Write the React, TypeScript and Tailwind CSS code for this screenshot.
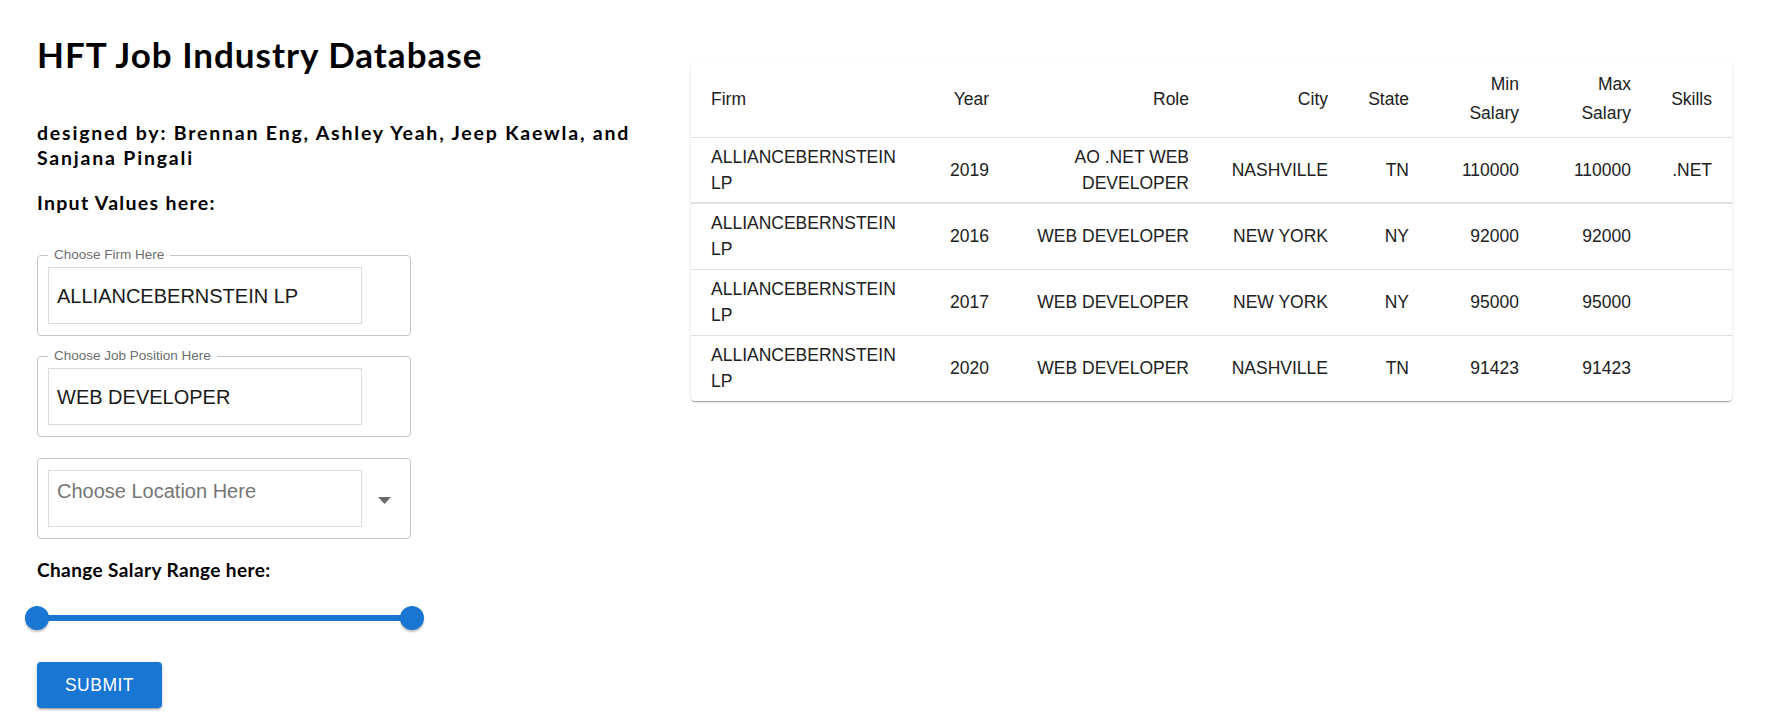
import { useState } from "react";

const rows = [
  { firm: "ALLIANCEBERNSTEIN LP", year: 2019, role: "AO .NET WEB DEVELOPER", city: "NASHVILLE", state: "TN", min: 110000, max: 110000, skills: ".NET" },
  { firm: "ALLIANCEBERNSTEIN LP", year: 2016, role: "WEB DEVELOPER", city: "NEW YORK", state: "NY", min: 92000, max: 92000, skills: "" },
  { firm: "ALLIANCEBERNSTEIN LP", year: 2017, role: "WEB DEVELOPER", city: "NEW YORK", state: "NY", min: 95000, max: 95000, skills: "" },
  { firm: "ALLIANCEBERNSTEIN LP", year: 2020, role: "WEB DEVELOPER", city: "NASHVILLE", state: "TN", min: 91423, max: 91423, skills: "" }
];

const heading = "font-['Lato',sans-serif] font-bold text-black";

function OutlinedField({ label, value, placeholder, select }: { label?: string; value?: string; placeholder?: string; select?: boolean }) {
  return (
    <div className="relative flex h-[81px] w-[374px] items-center rounded border border-[#c4c4c4] px-[10px]">
      {label && (
        <span className="absolute -top-[10px] left-[10px] bg-white px-[6px] text-[13.5px] leading-[18px] text-[#6e6e6e]">
          {label}
        </span>
      )}
      <div
        className={
          "flex h-[57px] w-[314px] border border-[#dcdcdc] px-[8px] text-[20px] leading-[24px] " +
          (select ? "items-start pt-[8px] text-[#767676]" : "items-center text-[#1a1a1a]")
        }
      >
        {value ?? placeholder}
      </div>
      {select && (
        <svg className="ml-[16px] mt-[4px]" width="13" height="7" viewBox="0 0 13 7">
          <polygon points="0,0 13,0 6.5,7" fill="#6b6b6b" />
        </svg>
      )}
    </div>
  );
}

export default function App() {
  const [firm] = useState("ALLIANCEBERNSTEIN LP");

  return (
    <div className="flex min-h-[718px] bg-white font-['Liberation_Sans',Arial,sans-serif]">
      {/* left: form */}
      <div className="w-[691px] shrink-0 pl-[37px] pt-[33px]">
        <h1 className={`${heading} text-[35px] leading-[42px] tracking-[1px]`}>HFT Job Industry Database</h1>
        <p className={`${heading} mt-[45px] w-[610px] text-[19.5px] leading-[25px] tracking-[1.8px]`}>
          designed by: Brennan Eng, Ashley Yeah, Jeep Kaewla, and Sanjana Pingali
        </p>
        <p className={`${heading} mt-[20px] text-[19.5px] leading-[25px] tracking-[1.3px]`}>Input Values here:</p>

        <div className="mt-[40px] flex flex-col">
          <OutlinedField label="Choose Firm Here" value={firm} />
          <div className="mt-[20px]">
            <OutlinedField label="Choose Job Position Here" value="WEB DEVELOPER" />
          </div>
          <div className="mt-[21px]">
            <OutlinedField placeholder="Choose Location Here" select />
          </div>
        </div>

        <p className={`${heading} mt-[18px] text-[19px] leading-[25px] tracking-[0.4px]`}>Change Salary Range here:</p>

        <div className="relative mt-[24px] flex h-[24px] w-[375px] items-center">
          <div className="h-[6px] w-full rounded-full bg-[#1976d2]" />
          <span className="absolute -left-[12px] top-0 h-[24px] w-[24px] rounded-full bg-[#1976d2] shadow-[0_2px_2px_rgba(0,0,0,0.25)]" />
          <span className="absolute -right-[12px] top-0 h-[24px] w-[24px] rounded-full bg-[#1976d2] shadow-[0_2px_2px_rgba(0,0,0,0.25)]" />
        </div>

        <button className="mt-[32px] h-[46px] w-[125px] rounded bg-[#1976d2] text-[17.5px] tracking-[0.5px] text-white shadow-[0_3px_1px_-2px_rgba(0,0,0,0.2),0_2px_2px_0_rgba(0,0,0,0.14),0_1px_5px_0_rgba(0,0,0,0.12)]">
          SUBMIT
        </button>
      </div>

      {/* right: results table */}
      <div className="mt-[62px] h-fit w-[1041px] overflow-hidden rounded bg-white shadow-[0_2px_1px_-1px_rgba(0,0,0,0.2),0_1px_1px_0_rgba(0,0,0,0.14),0_1px_3px_0_rgba(0,0,0,0.12)]">
        <table className="w-full table-fixed border-collapse text-[17.5px] text-[#212121]">
          <colgroup>
            <col className="w-[227px]" />
            <col className="w-[91px]" />
            <col className="w-[200px]" />
            <col className="w-[139px]" />
            <col className="w-[81px]" />
            <col className="w-[110px]" />
            <col className="w-[112px]" />
            <col className="w-[81px]" />
          </colgroup>
          <thead>
            <tr className="h-[75px] border-b border-[#e0e0e0] leading-[29px]">
              <th className="px-[20px] text-left font-normal">Firm</th>
              <th className="px-[20px] text-right font-normal">Year</th>
              <th className="px-[20px] text-right font-normal">Role</th>
              <th className="px-[20px] text-right font-normal">City</th>
              <th className="px-[20px] text-right font-normal">State</th>
              <th className="px-[20px] text-right font-normal">Min Salary</th>
              <th className="px-[20px] text-right font-normal">Max Salary</th>
              <th className="px-[20px] text-right font-normal">Skills</th>
            </tr>
          </thead>
          <tbody>
            {rows.map((r, i) => (
              <tr
                key={r.year}
                className={
                  "h-[66px] leading-[26px] " +
                  (i === 0 ? "border-b-2 border-[#e0e0e0]" : i < rows.length - 1 ? "border-b border-[#e0e0e0]" : "")
                }
              >
                <td className="px-[20px] text-left">{r.firm}</td>
                <td className="px-[20px] text-right">{r.year}</td>
                <td className="px-[20px] text-right">{r.role}</td>
                <td className="px-[20px] text-right">{r.city}</td>
                <td className="px-[20px] text-right">{r.state}</td>
                <td className="px-[20px] text-right">{r.min}</td>
                <td className="px-[20px] text-right">{r.max}</td>
                <td className="px-[20px] text-right">{r.skills}</td>
              </tr>
            ))}
          </tbody>
        </table>
      </div>
    </div>
  );
}
